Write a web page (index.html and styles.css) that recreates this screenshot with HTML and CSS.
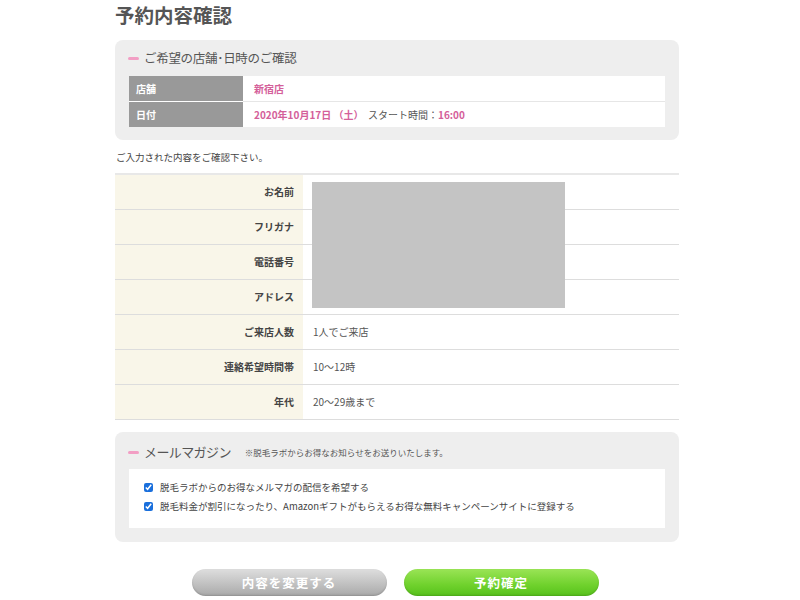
FILE: index.html
```html
<!DOCTYPE html>
<html lang="ja">
<head>
    <meta charset="UTF-8">
    <meta name="viewport" content="width=device-width, initial-scale=1.0">
    <title>予約内容確認</title>
    <link rel="stylesheet" href="styles.css">
</head>
<body>
    <div id="container">
        <h1>予約内容確認</h1>

        <div class="box">
            <h2 class="box-title">ご希望の店舗･日時のご確認</h2>
            <table class="shop-table">
                <tr>
                    <th>店舗</th>
                    <td>新宿店</td>
                </tr>
                <tr>
                    <th>日付</th>
                    <td>2020年10月17日 （土）&nbsp;&nbsp;<span class="plain">スタート時間：</span>16:00</td>
                </tr>
            </table>
        </div>

        <p class="lead">ご入力された内容をご確認下さい。</p>

        <div class="confirm">
            <table class="confirm-table">
                <tr><th>お名前</th><td></td></tr>
                <tr><th>フリガナ</th><td></td></tr>
                <tr><th>電話番号</th><td></td></tr>
                <tr><th>アドレス</th><td></td></tr>
                <tr><th>ご来店人数</th><td>1人でご来店</td></tr>
                <tr><th>連絡希望時間帯</th><td>10～12時</td></tr>
                <tr><th>年代</th><td>20～29歳まで</td></tr>
            </table>
            <div class="masked"></div>
        </div>

        <div class="box mail">
            <h2 class="box-title">メールマガジン <small>※脱毛ラボからお得なお知らせをお送りいたします。</small></h2>
            <div class="mail-body">
                <label><input type="checkbox" checked> 脱毛ラボからのお得なメルマガの配信を希望する</label>
                <label><input type="checkbox" checked> 脱毛料金が割引になったり、Amazonギフトがもらえるお得な無料キャンペーンサイトに登録する</label>
            </div>
        </div>

        <div class="buttons">
            <button type="button" class="btn btn-back">内容を変更する</button>
            <button type="button" class="btn btn-ok">予約確定</button>
        </div>
    </div>
</body>
</html>
```

FILE: styles.css
```css
body {
    font-family: "Noto Sans CJK JP", "Noto Sans", sans-serif;
    background-color: #ffffff;
    color: #444444;
    margin: 0;
    padding: 0;
}

#container {
    width: 564px;
    margin-left: 115px;
    padding-top: 3px;
}

h1 {
    font-size: 19.5px;
    line-height: 24px;
    color: #555555;
    margin: 0 0 13px 0;
    font-weight: bold;
}

.box {
    background-color: #eeeeee;
    border-radius: 8px;
    padding: 9px 14px 13px 14px;
}

.box-title {
    font-size: 12.5px;
    letter-spacing: -0.3px;
    font-weight: normal;
    color: #555555;
    line-height: 18px;
    height: 18px;
    margin: 0 0 9px 0;
    display: flex;
    align-items: center;
}

.box-title::before {
    content: "";
    display: inline-block;
    width: 11px;
    height: 3px;
    background-color: #f29ec4;
    border-radius: 2px;
    margin-right: 5px;
    margin-left: -1px;
}

.box-title small {
    font-size: 8.5px;
    letter-spacing: 0;
    color: #555555;
    margin-left: 14px;
}

.shop-table {
    width: 100%;
    border-collapse: collapse;
    background-color: #ffffff;
}

.shop-table th,
.shop-table td {
    height: 25px;
    padding: 0 0 0 7px;
    font-size: 10px;
    line-height: 14px;
    font-weight: bold;
    text-align: left;
}

.shop-table tr + tr th,
.shop-table tr + tr td {
    border-top: 1px solid #e6e6e6;
}

.shop-table tr + tr th {
    border-top-color: #ffffff;
}

.shop-table th {
    width: 107px;
    background-color: #999999;
    color: #ffffff;
}

.shop-table td {
    color: #d4609a;
    padding-left: 11px;
}

.shop-table .plain {
    color: #555555;
    font-weight: normal;
}

.lead {
    font-size: 9.5px;
    margin: 10px 0 9px 1px;
    line-height: 14px;
    color: #444444;
}

.confirm {
    position: relative;
}

.confirm-table {
    width: 100%;
    border-collapse: collapse;
    border-top: 2px solid #e8e8e8;
}

.confirm-table th,
.confirm-table td {
    height: 34px;
    padding-top: 0;
    padding-bottom: 0;
    line-height: 14px;
    border-bottom: 1px solid #dddddd;
    font-size: 10px;
}

.confirm-table th {
    width: 178px;
    background-color: #f9f6e9;
    text-align: right;
    padding-right: 9px;
    font-weight: bold;
    color: #444444;
}

.confirm-table td {
    padding-left: 10px;
    color: #555555;
}

.masked {
    position: absolute;
    left: 197px;
    top: 9px;
    width: 253px;
    height: 126px;
    background-color: #c4c4c4;
}

.mail {
    margin-top: 12px;
    padding-top: 10px;
    padding-bottom: 14px;
}

.box.mail .box-title {
    font-size: 13px;
    letter-spacing: -0.6px;
    height: 20px;
    margin-bottom: 7px;
}

.mail-body {
    background-color: #ffffff;
    padding: 10px 16px 14px 15px;
    display: flex;
    flex-direction: column;
    gap: 3px;
}

.mail-body label {
    font-size: 9.5px;
    color: #444444;
    display: flex;
    align-items: center;
    height: 16px;
}

.mail-body input {
    width: 9px;
    height: 9px;
    margin: 0 7px 0 0;
    accent-color: #1a6fdc;
}

.buttons {
    display: flex;
    justify-content: center;
    gap: 17px;
    margin-top: 27px;
    padding-right: 4px;
}

.btn {
    width: 195px;
    height: 27px;
    border: none;
    border-radius: 14px;
    color: #ffffff;
    font-family: "Noto Sans CJK JP", sans-serif;
    font-size: 12.5px;
    font-weight: bold;
    letter-spacing: 1px;
    cursor: pointer;
}

.btn-back {
    background: linear-gradient(#dedede, #b9b9b9 70%, #a8a8a8);
    box-shadow: inset 0 -1px 2px rgba(0, 0, 0, 0.15);
}

.btn-ok {
    background: linear-gradient(#9ae456, #6fd12c 60%, #57c11c);
    box-shadow: inset 0 -1px 2px rgba(0, 0, 0, 0.15);
}
```
